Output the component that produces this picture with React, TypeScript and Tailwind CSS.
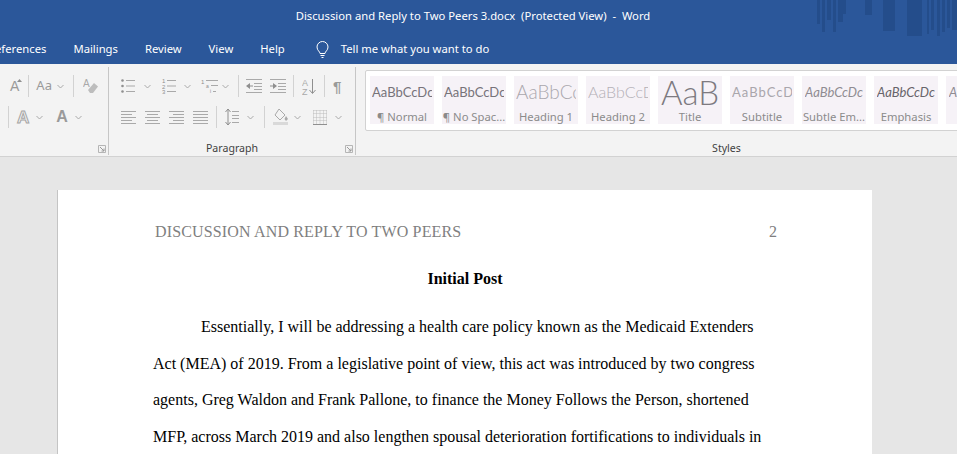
// Word "Protected View" window: title bar, ribbon (greyed out) and the top of the page.
const GREY = "#a9a9a9";
const DARK = "#8f8f8f";

const STYLES: { sample: string; name: string; cls: string }[] = [
  { sample: "AaBbCcDc", name: "¶ Normal", cls: "text-[13px] text-[#77737a]" },
  { sample: "AaBbCcDc", name: "¶ No Spac...", cls: "text-[13px] text-[#77737a]" },
  { sample: "AaBbCc", name: "Heading 1", cls: "text-[19px] text-[#aaa7ad] font-light" },
  { sample: "AaBbCcD", name: "Heading 2", cls: "text-[16px] text-[#b3b0b6] font-light" },
  { sample: "AaB", name: "Title", cls: "text-[33px] text-[#7d7a80] font-light" },
  { sample: "AaBbCcD", name: "Subtitle", cls: "text-[13px] tracking-[1px] text-[#a9a6ac]" },
  { sample: "AaBbCcDc", name: "Subtle Em...", cls: "text-[13px] italic text-[#8f8c92]" },
  { sample: "AaBbCcDc", name: "Emphasis", cls: "text-[13px] italic text-[#67646a]" },
  { sample: "AaBbCcDc", name: "In", cls: "text-[13px] italic text-[#8f8c92]" },
];

const BODY = [
  "Act (MEA) of 2019. From a legislative point of view, this act was introduced by two congress",
  "agents, Greg Waldon and Frank Pallone, to finance the Money Follows the Person, shortened",
  "MFP, across March 2019 and also lengthen spousal deterioration fortifications to individuals in",
];

// x, width, height of the darker stripes in the title bar artwork
const STRIPES: [number, number, number][] = [
  [17, 3, 24], [22, 3, 32], [27, 4, 20], [33, 3, 32], [38, 5, 22], [43, 3, 14],
  [65, 7, 15], [83, 12, 31], [107, 15, 36], [127, 2, 34], [131, 3, 30], [137, 3, 36],
  [142, 3, 32], [147, 3, 28], [152, 5, 30],
];

function Chevron({ className = "" }: { className?: string }) {
  return (
    <svg width="7" height="5" viewBox="0 0 7 5" className={className}>
      <path d="M.5 1 3.5 4 6.5 1" fill="none" stroke={GREY} />
    </svg>
  );
}

function Sep({ className = "" }: { className?: string }) {
  return <div className={`w-px h-[22px] bg-[#d2d2d2] ${className}`} />;
}

function Align({ kind, className = "" }: { kind: "l" | "c" | "r" | "j"; className?: string }) {
  const ys = [2, 5, 8, 11, 14];
  return (
    <svg width="15" height="16" viewBox="0 0 15 16" className={className}>
      {ys.map((y, i) => {
        const short = i % 2 === 1 && kind !== "j";
        const x1 = kind === "r" && short ? 4 : kind === "c" && short ? 2 : 0;
        const x2 = kind === "l" && short ? 11 : kind === "c" && short ? 13 : 15;
        return <path key={y} d={`M${x1} ${y + 0.5}H${x2}`} stroke={GREY} />;
      })}
    </svg>
  );
}

function ListIcon({ marks, className = "" }: { marks: string[]; className?: string }) {
  return (
    <svg width="14" height="16" viewBox="0 0 14 16" className={className}>
      {marks.map((m, i) => (
        <g key={i}>
          {m === "•" ? (
            <circle cx="1.5" cy={2.5 + i * 5.5} r="1.3" fill={DARK} />
          ) : (
            <text x="0" y={5 + i * 5.5} fontSize="6" fontFamily="Liberation Sans, sans-serif" fill={DARK}>
              {m}
            </text>
          )}
          <path d={`M5 ${2.5 + i * 5.5}H14`} stroke={GREY} />
        </g>
      ))}
    </svg>
  );
}

function Indent({ flip, className = "" }: { flip?: boolean; className?: string }) {
  return (
    <svg width="16" height="16" viewBox="0 0 16 16" className={className}>
      <path d="M0 1.5H16M8 5.5H16M8 8.5H16M8 11.5H16M0 14.5H16" stroke={GREY} />
      {flip ? (
        <path d="M0 7.5H3V5L7 8 3 11V8.500H0Z" fill={DARK} />
      ) : (
        <path d="M7 7.500H4V5L0 8 4 11V8.500H7Z" fill={DARK} />
      )}
    </svg>
  );
}

function Group({
  width,
  label,
  launcher,
  children,
}: {
  width: string;
  label?: string;
  launcher?: boolean;
  children: React.ReactNode;
}) {
  return (
    <div className={`${width} shrink-0 flex flex-col mt-[3px] h-[88px] border-r border-[#c6c6c6]`}>
      {children}
      <div className="mt-auto grid grid-cols-[1fr_auto_1fr] items-center h-[13px]">
        <span />
        <span className="text-[10.6px] leading-[13px] text-[#3f3f3f]">{label}</span>
        {launcher ? (
          <svg width="8" height="8" viewBox="0 0 8 8" className="justify-self-end mr-[2px]">
            <path d="M.5 7.500V.5H7.500V7.500Z" fill="none" stroke="#b5b5b5" />
            <path d="M2 2 6 6M6 3.500V6H3.500" fill="none" stroke="#9a9a9a" />
          </svg>
        ) : (
          <span />
        )}
      </div>
    </div>
  );
}

export default function App() {
  return (
    <div className="h-[454px] w-[957px] overflow-hidden bg-[#e6e6e6] font-['Noto_Sans','Open_Sans',sans-serif]">
      {/* title bar + tabs */}
      <div className="relative h-[64px] bg-[#2b579a] text-white overflow-hidden">
        <svg width="157" height="40" viewBox="0 0 157 40" className="absolute right-0 top-0 blur-[0.6px]">
          <g fill="#234a86" fillOpacity="0.75">
            {STRIPES.map(([x, w, h]) => (
              <rect key={x} x={x} y="0" width={w} height={h} />
            ))}
          </g>
        </svg>
        <div className="relative h-[32px] flex items-center justify-center text-[11.25px] pt-[1px] pr-[11px] whitespace-pre">
          Discussion and Reply to Two Peers 3.docx  (Protected View)  -  Word
        </div>
        <div className="h-[32px] pt-[3px] flex items-center text-[11.25px] whitespace-nowrap ml-[-12px] gap-[27px]">
          <span>References</span>
          <span>Mailings</span>
          <span>Review</span>
          <span>View</span>
          <span>Help</span>
          <span className="flex items-center ml-[4px]">
            <svg width="13" height="18" viewBox="0 0 13 18">
              <path
                d="M4 12.500C4 10.500 1 9.500 1 6A5.500 5.500 0 0 1 12 6C12 9.500 9 10.500 9 12.500ZM4.500 14.500H8.500M5.500 16.500H7.500"
                fill="none"
                stroke="#fff"
              />
            </svg>
            <span className="ml-[12px]">Tell me what you want to do</span>
          </span>
        </div>
      </div>

      {/* ribbon */}
      <div className="h-[93px] flex bg-[#f3f3f3] border-b border-[#d2d2d2] overflow-hidden">
        <Group width="w-[109px]" launcher>
          <div className="h-[22px] mt-[8px] flex items-center">
            <span className="ml-[10px] text-[14px] leading-none text-[#9a9a9a] font-['Liberation_Sans'] relative">
              A
              <svg width="5" height="3" viewBox="0 0 5 3" className="absolute -right-[3px] top-0">
                <path d="M0 3 2.500 0 5 3Z" fill={DARK} />
              </svg>
            </span>
            <Sep className="ml-[9px]" />
            <span className="ml-[7px] text-[13px] text-[#9a9a9a]">Aa</span>
            <Chevron className="ml-[5px]" />
            <Sep className="ml-[9px]" />
            <svg width="15" height="16" viewBox="0 0 15 16" className="ml-[9px]">
              <text x="0" y="9" fontSize="10" fontFamily="Liberation Sans, sans-serif" fill={GREY}>
                A
              </text>
              <path d="M5 12 11 5 15 8.500 10 15H7Z" fill="#bdbdbd" />
            </svg>
          </div>
          <div className="h-[22px] mt-[9px] flex items-center">
            <Sep className="ml-[8px]" />
            <span className="ml-[8px] text-[17px] leading-none text-[#f3f3f3] font-['Liberation_Sans'] font-bold [-webkit-text-stroke:1px_#a5a5a5]">
              A
            </span>
            <Chevron className="ml-[7px]" />
            <span className="ml-[13px] text-[16px] leading-none text-[#9a9a9a] font-['Liberation_Sans'] font-bold">
              A
            </span>
            <Chevron className="ml-[7px]" />
          </div>
        </Group>

        <Group width="w-[247px]" label="Paragraph" launcher>
          <div className="h-[22px] mt-[8px] flex items-center">
            <ListIcon marks={["•", "•", "•"]} className="ml-[12px]" />
            <Chevron className="ml-[9px]" />
            <ListIcon marks={["1", "2", "3"]} className="ml-[11px]" />
            <Chevron className="ml-[8px]" />
            <svg width="17" height="16" viewBox="0 0 17 16" className="ml-[10px]">
              <text x="0" y="6" fontSize="6" fontFamily="Liberation Sans, sans-serif" fill={DARK}>1</text>
              <text x="5" y="10" fontSize="5" fontFamily="Liberation Sans, sans-serif" fill={DARK}>a</text>
              <text x="9" y="15" fontSize="5" fontFamily="Liberation Sans, sans-serif" fill={DARK}>i</text>
              <path d="M5 2.500H17M10 7.500H17M12 13.500H15" stroke={GREY} />
            </svg>
            <Chevron className="ml-[4px]" />
            <Sep className="ml-[9px]" />
            <Indent className="ml-[7px]" />
            <Indent flip className="ml-[8px]" />
            <Sep className="ml-[7px]" />
            <svg width="14" height="17" viewBox="0 0 14 17" className="ml-[8px]">
              <text x="0" y="8" fontSize="9" fontFamily="Liberation Sans, sans-serif" fill={GREY}>A</text>
              <text x="0" y="16.500" fontSize="9" fontFamily="Liberation Sans, sans-serif" fill={GREY}>Z</text>
              <path d="M10.500 1V15M7.500 12 10.500 15.500 13.500 12" fill="none" stroke={DARK} />
            </svg>
            <Sep className="ml-[8px]" />
            <span className="ml-[8px] text-[15px] leading-none text-[#9a9a9a] font-['Liberation_Sans'] font-bold">¶</span>
          </div>
          <div className="h-[22px] mt-[9px] flex items-center">
            <Align kind="l" className="ml-[12px]" />
            <Align kind="c" className="ml-[9px]" />
            <Align kind="r" className="ml-[9px]" />
            <Align kind="j" className="ml-[9px]" />
            <Sep className="ml-[8px]" />
            <svg width="14" height="18" viewBox="0 0 14 18" className="ml-[8px]">
              <path d="M3 1V17M.5 4 3 1 5.500 4M.5 14 3 17 5.500 14" fill="none" stroke={DARK} />
              <path d="M7 3.500H14M7 7.500H14M7 10.500H14M7 14.500H14" stroke={GREY} />
            </svg>
            <Chevron className="ml-[8px]" />
            <Sep className="ml-[10px]" />
            <svg width="15" height="18" viewBox="0 0 15 18" className="ml-[8px]">
              <path d="M6 1 12 7 7 12 2 7Z" fill="none" stroke={GREY} />
              <path d="M13 8 15 11 13 13 11.500 11Z" fill={GREY} />
              <rect x="0" y="14" width="15" height="3" fill="#d9d9d9" />
            </svg>
            <Chevron className="ml-[6px]" />
            <svg width="14" height="15" viewBox="0 0 14 15" className="ml-[12px]">
              <path
                d="M.5 .5H13.500M.5 3.500H13.500M.5 7.500H13.500M.5 10.500H13.500M.5 .5V14M3.500 .5V14M7 .5V14M10.500 .5V14M13.500 .5V14"
                fill="none"
                stroke="#bcbcbc"
                strokeDasharray="1 1"
              />
              <path d="M0 14.500H14" stroke={DARK} />
            </svg>
            <Chevron className="ml-[8px]" />
          </div>
        </Group>

        <div className="flex-1 min-w-0 flex flex-col mt-[3px] h-[88px]">
          <div className="ml-[9px] mt-[3px] h-[61px] w-[700px] shrink-0 bg-white border border-[#d2d2d2] rounded-[2px] flex gap-[8px] pl-[4px] pt-[5px] font-['Lato',sans-serif]">
            {STYLES.map((s) => (
              <div key={s.name} className="w-[64px] h-[48px] shrink-0 bg-[#f6f2f7] flex flex-col items-center overflow-hidden">
                <div className={`h-[32px] w-[62px] flex items-center justify-center overflow-hidden whitespace-nowrap leading-[30px] ${s.cls}`}>
                  <span className="block max-w-[60px] overflow-hidden">{s.sample}</span>
                </div>
                <div className="mt-[2px] text-[11.25px] leading-[14px] text-[#8b8b8b] whitespace-nowrap font-['Noto_Sans',sans-serif]">{s.name}</div>
              </div>
            ))}
          </div>
          <div className="mt-auto h-[13px] text-center text-[10.6px] leading-[13px] text-[#3f3f3f] pl-[140px]">Styles</div>
        </div>
      </div>

      {/* document page */}
      <div className="ml-[57px] mt-[33px] w-[815px] h-[400px] bg-white border-l border-[#c4c4c4] pl-[95px] pr-[95px] font-['Liberation_Serif','Times_New_Roman',serif] text-[16px] text-black">
        <div className="pt-[32px] pl-[2px] flex justify-between text-[#7f7f7f] leading-[20px]">
          <span className="tracking-[0.15px]">DISCUSSION AND REPLY TO TWO PEERS</span>
          <span>2</span>
        </div>
        <div className="mt-[27px] text-center font-bold leading-[20px]">Initial Post</div>
        <div className="mt-[20px] leading-[36.5px] whitespace-nowrap">
          <div className="pl-[48px]">Essentially, I will be addressing a health care policy known as the Medicaid Extenders</div>
          {BODY.map((line) => (
            <div key={line}>{line}</div>
          ))}
        </div>
      </div>
    </div>
  );
}
